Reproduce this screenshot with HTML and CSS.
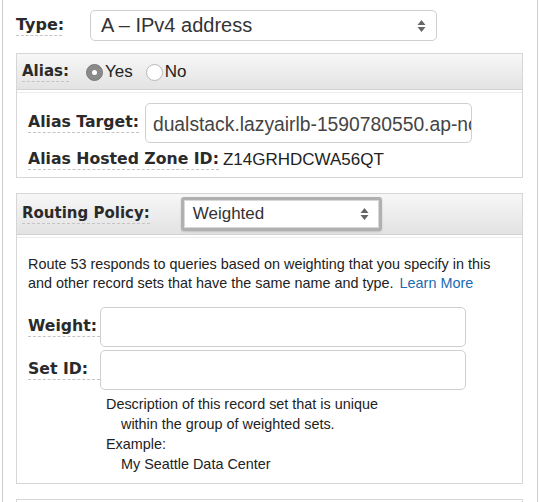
FILE: index.html
```html
<!DOCTYPE html>
<html>
<head>
<meta charset="utf-8">
<link rel="stylesheet" href="styles.css">
</head>
<body>
<div class="frame">
  <div class="type-row">
    <span class="lbl lbl-type">Type:</span>
    <div class="select select-type">
      <span>A – IPv4 address</span>
      <svg class="arrows" width="9" height="14" viewBox="0 0 9 14"><path d="M4.5 1 L8.5 6 L0.5 6 Z M4.5 13 L8.5 8 L0.5 8 Z" fill="#666"/></svg>
    </div>
  </div>

  <div class="panel panel-alias">
    <div class="phead phead-alias">
      <span class="lbl hlbl">Alias:</span>
      <span class="radio checked"></span><span class="rtxt">Yes</span>
      <span class="radio"></span><span class="rtxt">No</span>
    </div>
    <div class="pbody alias-body">
      <div class="row-target">
        <span class="lbl">Alias Target:</span>
        <div class="input input-target"><span>dualstack.lazyairlb-1590780550.ap-northeast-1.elb.amazonaws.com</span></div>
      </div>
      <div class="row-zone">
        <span class="lbl">Alias Hosted Zone ID:</span>
        <span class="val">Z14GRHDCWA56QT</span>
      </div>
    </div>
  </div>

  <div class="panel panel-routing">
    <div class="phead phead-routing">
      <span class="lbl hlbl">Routing Policy:</span>
      <div class="select select-routing">
        <span>Weighted</span>
        <svg class="arrows" width="9" height="14" viewBox="0 0 9 14"><path d="M4.5 1 L8.5 6 L0.5 6 Z M4.5 13 L8.5 8 L0.5 8 Z" fill="#666"/></svg>
      </div>
    </div>
    <div class="pbody routing-body">
      <p class="desc">Route 53 responds to queries based on weighting that you specify in this and other record sets that have the same name and type. <a class="link">Learn More</a></p>
      <div class="frow">
        <span class="lbl flbl">Weight:</span>
        <div class="input input-field"></div>
      </div>
      <div class="frow">
        <span class="lbl flbl">Set ID:</span>
        <div class="input input-field"></div>
      </div>
      <div class="hint">
        <div>Description of this record set that is unique</div>
        <div class="ind">within the group of weighted sets.</div>
        <div>Example:</div>
        <div class="ind">My Seattle Data Center</div>
      </div>
    </div>
  </div>

  <div class="panel panel-next"></div>
</div>
</body>
</html>
```

FILE: styles.css
```css
html, body {
  margin: 0;
  padding: 0;
  background: #fff;
}
body {
  font-family: "Liberation Sans", Arial, sans-serif;
  color: #222;
  overflow: hidden;
  height: 502px;
}
.frame {
  margin-left: 2px;
  width: 536px;
  height: 502px;
  border-left: 1px solid #cfcfcf;
  border-right: 1px solid #cfcfcf;
  padding: 10px 0 0 13px;
  box-sizing: border-box;
  overflow: hidden;
}
.lbl {
  font-family: "DejaVu Sans", Verdana, sans-serif;
  font-weight: bold;
  font-size: 15.7px;
  color: #2a2a2a;
  border-bottom: 1px dashed #c4c4c4;
  line-height: 18px;
  padding-bottom: 1px;
  white-space: nowrap;
}
.hlbl { font-size: 15px; }
.type-row {
  display: flex;
  align-items: center;
  height: 31px;
  margin-bottom: 12px;
}
.lbl-type {
  font-size: 16px;
  width: 46px;
  margin-right: 28px;
}
.select {
  display: flex;
  align-items: center;
  justify-content: space-between;
  box-sizing: border-box;
  background: #fff;
  color: #333;
}
.select-type {
  width: 347px;
  height: 31px;
  border: 1px solid #cfcfcf;
  border-radius: 5px;
  padding: 0 10px 0 10px;
  font-size: 20px;
}
.arrows { display: block; }

.panel {
  width: 507px;
  border: 1px solid #d6d6d6;
  box-sizing: border-box;
  margin-bottom: 15px;
}
.phead {
  display: flex;
  align-items: center;
  background: linear-gradient(#f7f7f7, #e3e3e3);
  border-bottom: 1px solid #d2d2d2;
  padding-left: 5px;
}
.phead-alias {
  height: 35px;
}
.radio {
  width: 17px;
  height: 17px;
  border-radius: 50%;
  border: 1px solid #b8b8b8;
  background: #fff;
  box-sizing: border-box;
  margin-left: 13px;
  position: relative;
  top: 1px;
}
.phead-alias .hlbl + .radio { margin-left: 17px; }
.radio.checked {
  background: #8a8a8a;
  border-color: #7a7a7a;
  display: flex;
  align-items: center;
  justify-content: center;
}
.radio.checked::after {
  content: "";
  width: 5px;
  height: 5px;
  border-radius: 50%;
  background: #fff;
}
.rtxt {
  font-size: 17px;
  color: #222;
  margin-left: 2px;
}
.pbody {
  border-top: 1px solid #ececec;
  margin-top: 2px;
  padding: 0 0 0 11px;
}
.alias-body {
  padding-top: 10px;
  padding-bottom: 7px;
}
.row-target {
  display: flex;
  align-items: center;
}
.row-target .lbl { margin-right: 6px; }
.input {
  box-sizing: border-box;
  border: 1px solid #cfcfcf;
  border-radius: 5px;
  background: #fff;
  overflow: hidden;
  white-space: nowrap;
}
.input-target {
  width: 327px;
  height: 40px;
  display: flex;
  align-items: center;
  padding-left: 7px;
  padding-top: 3px;
  font-size: 19.3px;
  color: #444;
}
.row-zone {
  display: flex;
  align-items: center;
  margin-top: 7px;
}
.row-zone .lbl { margin-right: 4px; }
.val {
  font-size: 17px;
  color: #222;
}
.phead-routing {
  height: 40px;
}
.phead-routing .hlbl { margin-right: 31px; }
.select-routing {
  width: 201px;
  height: 34px;
  border: 3px solid #b0b0b0;
  border-radius: 3px;
  box-shadow: inset 0 0 0 1px #d8d8d8, 0 1px 2px rgba(0,0,0,0.15);
  padding: 0 10px 0 9px;
  font-size: 17px;
  color: #333;
}
.routing-body {
  padding-top: 17px;
  padding-bottom: 9px;
}
.desc {
  margin: 0;
  font-size: 14.4px;
  line-height: 19px;
  color: #222;
  width: 485px;
}
.link { color: #1a6bb0; margin-left: 2px; }
.frow {
  display: flex;
  align-items: center;
  margin-top: 3px;
}
.routing-body .desc + .frow { margin-top: 14px; }
.flbl {
  width: 72px;
}
.input-field {
  width: 366px;
  height: 40px;
}
.hint {
  font-size: 14.4px;
  line-height: 20px;
  color: #222;
  margin: 4px 0 0 78px;
}
.hint .ind { padding-left: 15px; }
.panel-next {
  height: 40px;
}
```
